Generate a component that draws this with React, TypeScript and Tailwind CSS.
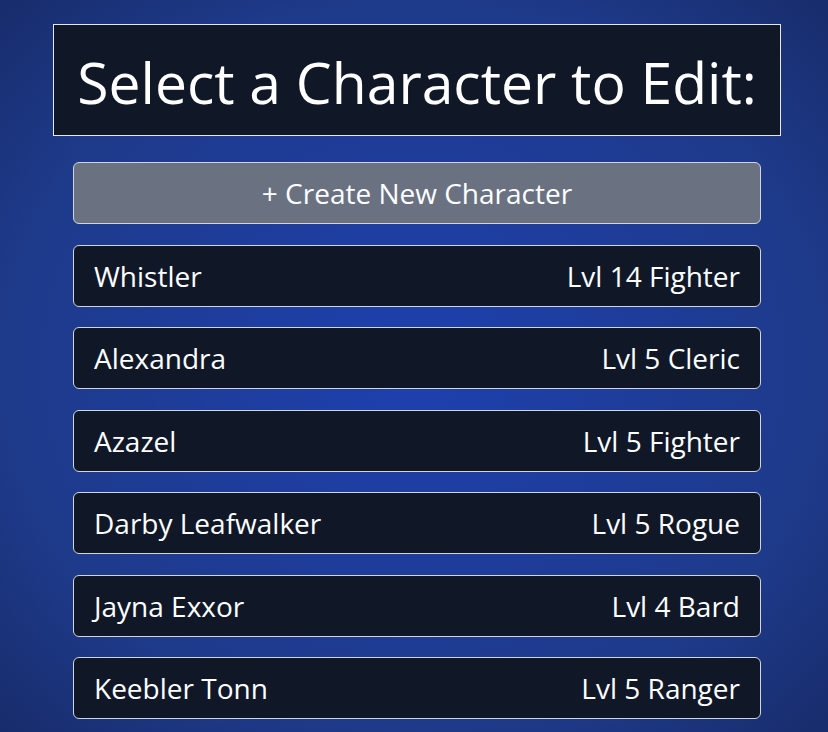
import React from "react";

type Character = { name: string; level: number; cls: string };

const characters: Character[] = [
  { name: "Whistler", level: 14, cls: "Fighter" },
  { name: "Alexandra", level: 5, cls: "Cleric" },
  { name: "Azazel", level: 5, cls: "Fighter" },
  { name: "Darby Leafwalker", level: 5, cls: "Rogue" },
  { name: "Jayna Exxor", level: 4, cls: "Bard" },
  { name: "Keebler Tonn", level: 5, cls: "Ranger" },
];

const font = { fontFamily: '"Segoe UI", "Open Sans", "Noto Sans", sans-serif' };

export default function App() {
  return (
    <div
      className="h-[732px] w-[828px] overflow-hidden bg-[radial-gradient(ellipse_at_center,#1e40af_0%,#1e3a8a_70%,#172c6b_100%)] text-white"
      style={font}
    >
      <div className="ml-[53px] w-[728px] pt-[24px]">
        <h1 className="flex h-[112px] items-center justify-center border border-gray-200 bg-gray-900 pt-1 text-[57px] leading-none">
          Select a Character to Edit:
        </h1>
        <div className="mx-5 mt-[26px] flex flex-col gap-[20.5px]">
          <button className="h-[62px] rounded-md border border-gray-300 bg-gray-500 text-[28px] text-white">
            + Create New Character
          </button>
          {characters.map((c) => (
            <div
              key={c.name}
              className="flex h-[62px] items-center justify-between rounded-md border border-gray-300 bg-gray-900 px-5 text-[28px]"
            >
              <span>{c.name}</span>
              <span>
                Lvl {c.level} {c.cls}
              </span>
            </div>
          ))}
        </div>
      </div>
    </div>
  );
}
